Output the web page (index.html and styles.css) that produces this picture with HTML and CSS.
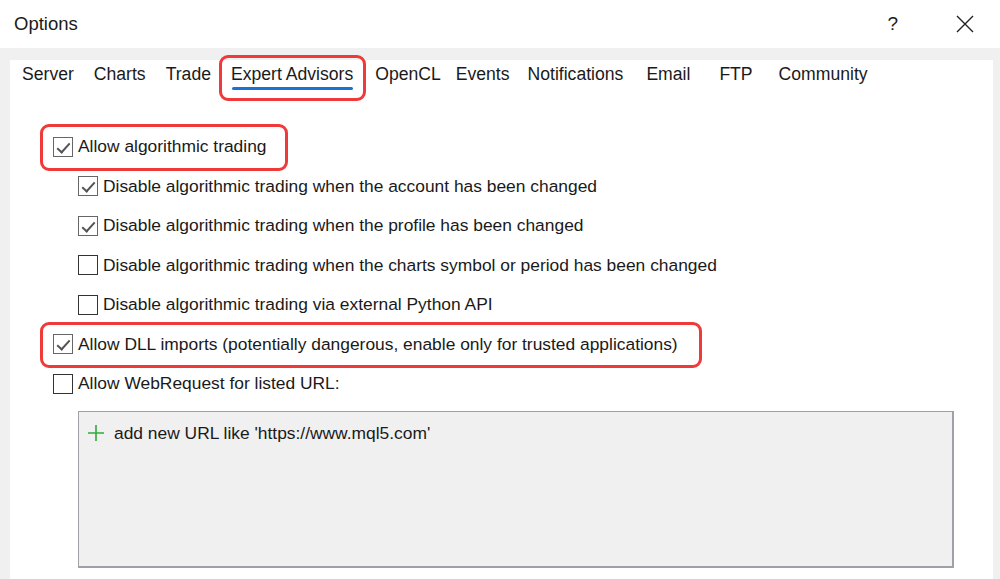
FILE: index.html
```html
<!DOCTYPE html>
<html lang="en">
<head>
  <meta charset="UTF-8">
  <title>Options</title>
  <link rel="stylesheet" href="styles.css">
</head>
<body>
  <div class="titlebar">
    <span class="title">Options</span>
    <span class="help">?</span>
    <span class="close">
      <svg width="18" height="18" viewBox="0 0 18 18"><path d="M1 1L17 17M17 1L1 17" stroke="#222" stroke-width="1.4" fill="none"/></svg>
    </span>
  </div>

  <div class="frame">
    <div class="panel">
      <div class="tabs">
        <span class="tab">Server</span>
        <span class="tab">Charts</span>
        <span class="tab">Trade</span>
        <span class="tab active">Expert Advisors</span>
        <span class="tab opencl">OpenCL</span>
        <span class="tab events">Events</span>
        <span class="tab notify">Notifications</span>
        <span class="tab email">Email</span>
        <span class="tab ftp">FTP</span>
        <span class="tab">Community</span>
      </div>

      <div class="options">
        <label class="row mark"><span class="box checked"></span>Allow algorithmic trading</label>
        <label class="row sub"><span class="box checked"></span>Disable algorithmic trading when the account has been changed</label>
        <label class="row sub"><span class="box checked"></span>Disable algorithmic trading when the profile has been changed</label>
        <label class="row sub"><span class="box"></span>Disable algorithmic trading when the charts symbol or period has been changed</label>
        <label class="row sub"><span class="box"></span>Disable algorithmic trading via external Python API</label>
        <label class="row mark wide"><span class="box checked"></span>Allow DLL imports (potentially dangerous, enable only for trusted applications)</label>
        <label class="row"><span class="box"></span>Allow WebRequest for listed URL:</label>

        <div class="urls">
          <div class="url-add">
            <svg width="16" height="16" viewBox="0 0 16 16"><path d="M8 0V16M0 8H16" stroke="#2faa3a" stroke-width="1.6" fill="none"/></svg>
            add new URL like 'https://www.mql5.com'
          </div>
        </div>
      </div>
    </div>
  </div>
</body>
</html>
```

FILE: styles.css
```css
body {
  margin: 0;
  font-family: "Liberation Sans", Arial, sans-serif;
  font-size: 17.4px;
  color: #1a1a1a;
  background: #fff;
  height: 579px;
  overflow: hidden;
  display: flex;
  flex-direction: column;
}

.titlebar {
  height: 48px;
  display: flex;
  align-items: center;
  padding: 0 26px 0 14px;
  flex-shrink: 0;
}

.title {
  font-size: 18.5px;
  flex: 1;
}

.help {
  font-size: 19px;
  margin-right: 58px;
}

.close svg {
  display: block;
}

.frame {
  flex: 1;
  background: #f0f0f0;
  padding: 12px 7px 0 10px;
  display: flex;
}

.panel {
  flex: 1;
  background: #fff;
}

.tabs {
  display: flex;
  align-items: flex-start;
  padding: 3px 0 0 12px;
  height: 36px;
  font-size: 17.6px;
}

.tab {
  margin-right: 20px;
  line-height: 22px;
  position: relative;
}

.tab.active {
  margin-right: 22px;
}

.tab.opencl {
  margin-right: 15px;
}

.tab.events {
  margin-right: 18px;
}

.tab.notify {
  margin-right: 23px;
}

.tab.email {
  margin-right: 29px;
}

.tab.ftp {
  margin-right: 26px;
}

.tab.active::before {
  content: "";
  position: absolute;
  left: -12px;
  right: -13px;
  top: -8px;
  bottom: -16px;
  border: 3px solid #f03a3a;
  border-radius: 9px;
}

.tab.active::after {
  content: "";
  position: absolute;
  left: 1px;
  right: 0;
  bottom: -5px;
  height: 3px;
  background: #1a73d0;
  border-radius: 2px;
}

.options {
  padding: 28px 0 0 43px;
}

.row {
  display: flex;
  align-items: center;
  height: 39.5px;
  position: relative;
  width: max-content;
}

.row.sub {
  margin-left: 25px;
}

.row.mark::before {
  content: "";
  position: absolute;
  left: -13px;
  right: -22px;
  top: -3px;
  bottom: -4px;
  border: 3px solid #f03a3a;
  border-radius: 9px;
}

.row.wide::before {
  right: -24px;
}

.box {
  width: 18px;
  height: 18px;
  border: 1px solid #333;
  margin-right: 5px;
  position: relative;
  flex-shrink: 0;
}

.box.checked {
  border-color: #666;
}

.box.checked::after {
  content: "";
  position: absolute;
  left: 3px;
  top: 1px;
  width: 11px;
  height: 5px;
  border-left: 2px solid #555;
  border-bottom: 2px solid #555;
  transform: translate(0, 4px) rotate(-48deg);
}

.urls {
  margin: 7px 0 0 25px;
  width: 873px;
  height: 154px;
  background: #f0f0f0;
  border: 1px solid #a0a0a6;
  border-right-width: 2px;
  border-bottom-width: 2px;
}

.url-add {
  display: flex;
  align-items: center;
  gap: 10px;
  padding: 11px 0 0 9px;
}

.url-add svg {
  display: block;
}
```
